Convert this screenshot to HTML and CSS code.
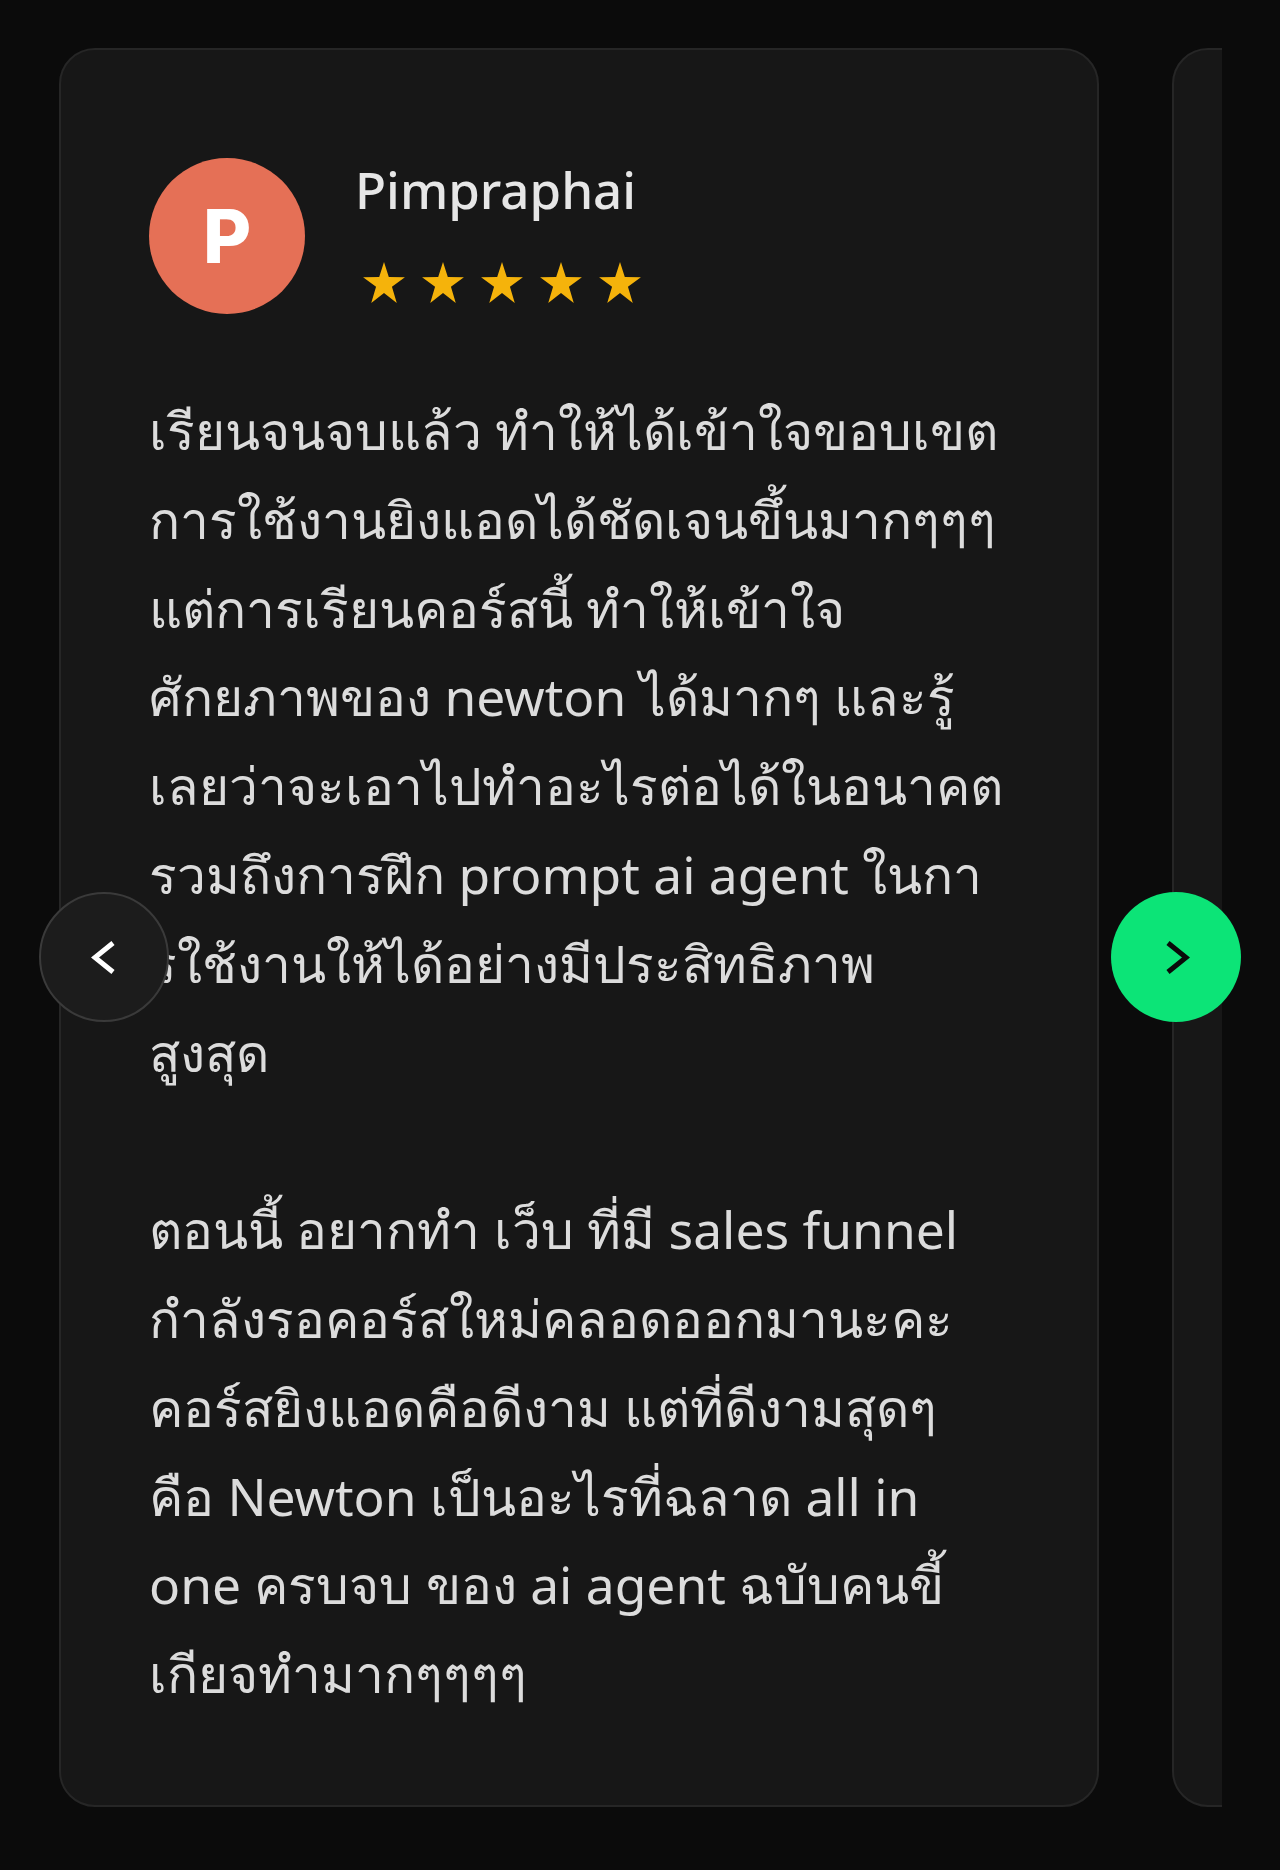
FILE: index.html
```html
<!DOCTYPE html>
<html lang="th">
<head>
<meta charset="utf-8">
<title>Reviews</title>
<link rel="stylesheet" href="styles.css">
</head>
<body>
<section class="carousel">
  <div class="viewport">
    <article class="card">
      <header class="card-head">
        <div class="avatar">P</div>
        <div class="meta">
          <div class="name">Pimpraphai</div>
          <div class="stars">
            <svg class="star" viewBox="0 0 100 98"><polygon points="50,0 61.5,36 100,36.5 69,59 80.5,98 50,74 19.5,98 31,59 0,36.5 38.5,36"/></svg>
            <svg class="star" viewBox="0 0 100 98"><polygon points="50,0 61.5,36 100,36.5 69,59 80.5,98 50,74 19.5,98 31,59 0,36.5 38.5,36"/></svg>
            <svg class="star" viewBox="0 0 100 98"><polygon points="50,0 61.5,36 100,36.5 69,59 80.5,98 50,74 19.5,98 31,59 0,36.5 38.5,36"/></svg>
            <svg class="star" viewBox="0 0 100 98"><polygon points="50,0 61.5,36 100,36.5 69,59 80.5,98 50,74 19.5,98 31,59 0,36.5 38.5,36"/></svg>
            <svg class="star" viewBox="0 0 100 98"><polygon points="50,0 61.5,36 100,36.5 69,59 80.5,98 50,74 19.5,98 31,59 0,36.5 38.5,36"/></svg>
          </div>
        </div>
      </header>
      <div class="review">
        <p>เรียนจนจบแล้ว ทำให้ได้เข้าใจขอบเขต<br>การใช้งานยิงแอดได้ชัดเจนขึ้นมากๆๆๆ<br>แต่การเรียนคอร์สนี้ ทำให้เข้าใจ<br>ศักยภาพของ newton ได้มากๆ และรู้<br>เลยว่าจะเอาไปทำอะไรต่อได้ในอนาคต<br>รวมถึงการฝึก prompt ai agent ในกา<br>รใช้งานให้ได้อย่างมีประสิทธิภาพ<br>สูงสุด</p>
        <p>ตอนนี้ อยากทำ เว็บ ที่มี sales funnel<br>กำลังรอคอร์สใหม่คลอดออกมานะคะ<br>คอร์สยิงแอดคือดีงาม แต่ที่ดีงามสุดๆ<br>คือ Newton เป็นอะไรที่ฉลาด all in<br>one ครบจบ ของ ai agent ฉบับคนขี้<br>เกียจทำมากๆๆๆๆ</p>
      </div>
    </article>
    <article class="card card-next" aria-hidden="true"></article>
  </div>
  <button class="nav nav-prev" aria-label="Previous">
    <svg viewBox="0 0 25 33"><polyline points="22,2 4,16.5 22,31"/></svg>
  </button>
  <button class="nav nav-next" aria-label="Next">
    <svg viewBox="0 0 25 33"><polyline points="3,2 21,16.5 3,31"/></svg>
  </button>
</section>
</body>
</html>
```

FILE: styles.css
```css
html, body {
  margin: 0;
  padding: 0;
  background: #0b0b0b;
}

body {
  width: 1280px;
  height: 1870px;
  overflow: hidden;
  font-family: "Noto Sans", "Open Sans", sans-serif;
  color: #dcdcdc;
}

.carousel {
  position: relative;
  padding-top: 48px;
}

.viewport {
  margin-left: 59px;
  width: 1163px;
  overflow: hidden;
  display: flex;
  gap: 73px;
}

.card {
  flex: 0 0 1040px;
  height: 1759px;
  box-sizing: border-box;
  border: 2px solid #262626;
  border-radius: 36px;
  background: #171717;
  padding: 108px 88px 0 88px;
}

.card-head {
  display: flex;
  align-items: flex-start;
  gap: 50px;
}

.avatar {
  flex: 0 0 156px;
  width: 156px;
  height: 156px;
  border-radius: 50%;
  background: #e57056;
  color: #ffffff;
  font-family: Inter, "Noto Sans", sans-serif;
  font-weight: 800;
  font-size: 74px;
  display: flex;
  align-items: center;
  justify-content: center;
}

.meta {
  display: flex;
  flex-direction: column;
}

.name {
  font-size: 51px;
  font-weight: 500;
  line-height: 62px;
  color: #e6e6e6;
}

.stars {
  display: flex;
  gap: 17px;
  margin-top: 42px;
  padding-left: 8px;
}

.star {
  display: block;
  width: 42px;
  height: 41px;
  fill: #f5b30b;
}

.review {
  margin-top: 72px;
  font-size: 51.5px;
  line-height: 88.8px;
  color: #dcdcdc;
}

.review p {
  margin: 0;
  white-space: nowrap;
}

.review p + p {
  margin-top: 88.8px;
}

.nav {
  position: absolute;
  top: 892px;
  width: 130px;
  height: 130px;
  border-radius: 50%;
  padding: 0;
  display: flex;
  align-items: center;
  justify-content: center;
  cursor: pointer;
}

.nav svg {
  width: 25px;
  height: 33px;
  fill: none;
  stroke-width: 5;
  stroke-linejoin: miter;
}

.nav-prev {
  left: 39px;
  background: #1c1c1c;
  border: 2px solid #3a3a3a;
}

.nav-prev svg {
  stroke: #ffffff;
  margin-left: -2px;
}

.nav-next {
  left: 1111px;
  background: #0ce477;
  border: none;
}

.nav-next svg {
  stroke: #0a0a0a;
  margin-left: 2px;
}
```
